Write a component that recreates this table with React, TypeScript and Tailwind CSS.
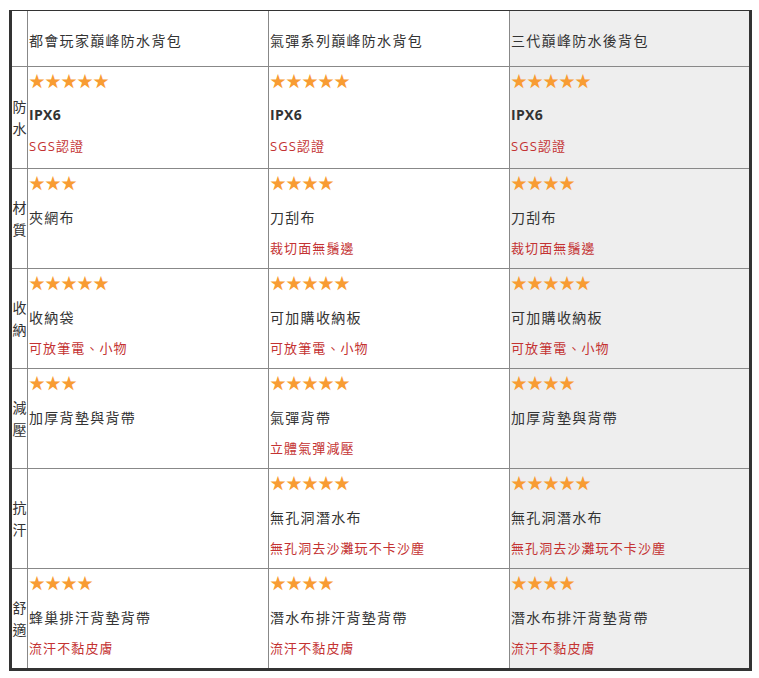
import React from "react";

type Cell = { stars: number; main: string; sub: string; bold?: boolean } | null;

const headers = ["都會玩家巔峰防水背包", "氣彈系列巔峰防水背包", "三代巔峰防水後背包"];

const rows: { label: string; cells: Cell[] }[] = [
  {
    label: "防水",
    cells: [
      { stars: 5, main: "IPX6", sub: "SGS認證", bold: true },
      { stars: 5, main: "IPX6", sub: "SGS認證", bold: true },
      { stars: 5, main: "IPX6", sub: "SGS認證", bold: true },
    ],
  },
  {
    label: "材質",
    cells: [
      { stars: 3, main: "夾網布", sub: "" },
      { stars: 4, main: "刀刮布", sub: "裁切面無鬚邊" },
      { stars: 4, main: "刀刮布", sub: "裁切面無鬚邊" },
    ],
  },
  {
    label: "收納",
    cells: [
      { stars: 5, main: "收納袋", sub: "可放筆電、小物" },
      { stars: 5, main: "可加購收納板", sub: "可放筆電、小物" },
      { stars: 5, main: "可加購收納板", sub: "可放筆電、小物" },
    ],
  },
  {
    label: "減壓",
    cells: [
      { stars: 3, main: "加厚背墊與背帶", sub: "" },
      { stars: 5, main: "氣彈背帶", sub: "立體氣彈減壓" },
      { stars: 4, main: "加厚背墊與背帶", sub: "" },
    ],
  },
  {
    label: "抗汗",
    cells: [
      null,
      { stars: 5, main: "無孔洞潛水布", sub: "無孔洞去沙灘玩不卡沙塵" },
      { stars: 5, main: "無孔洞潛水布", sub: "無孔洞去沙灘玩不卡沙塵" },
    ],
  },
  {
    label: "舒適",
    cells: [
      { stars: 4, main: "蜂巢排汗背墊背帶", sub: "流汗不黏皮膚" },
      { stars: 4, main: "潛水布排汗背墊背帶", sub: "流汗不黏皮膚" },
      { stars: 4, main: "潛水布排汗背墊背帶", sub: "流汗不黏皮膚" },
    ],
  },
];

const font = { fontFamily: '"Open Sans", "Noto Sans CJK TC", sans-serif' };

function DataCell({ cell, gray }: { cell: Cell; gray: boolean }) {
  return (
    <div className={`${gray ? "bg-[#eeeeee]" : "bg-white"} pl-px pt-[3px] flex flex-col`}>
      {cell && (
        <>
          <div className="h-[20px] leading-[20px] text-[16px] text-[#f89c33]" style={{ fontFamily: '"Noto Sans CJK TC", sans-serif' }}>
            {"★".repeat(cell.stars)}
          </div>
          <div
            className={`mt-[16px] h-[20px] leading-[20px] text-[14px] text-[#333] ${cell.bold ? "font-bold tracking-[0.3px] -translate-y-px" : "tracking-[1.3px]"}`}
          >
            {cell.main}
          </div>
          {cell.sub && (
            <div className="mt-[10px] h-[20px] leading-[20px] text-[13px] tracking-[1.1px] text-[#c43232]">{cell.sub}</div>
          )}
        </>
      )}
    </div>
  );
}

export default function App() {
  return (
    <div className="bg-white w-[759px] h-[678px] pt-[10px] pl-[9px]" style={font}>
      <div className="w-[743px] border-[#333] border-t border-x-[3px] border-b-[3px] bg-[#888] grid grid-cols-[15px_240px_240px_239px] grid-rows-[55px_101px_99px_99px_99px_99px_99px] gap-px">
        <div className="bg-white" />
        {headers.map((h, i) => (
          <div
            key={h}
            className={`${i === 2 ? "bg-[#eeeeee]" : "bg-white"} flex items-center pl-px pt-[4px] text-[14px] tracking-[1.3px] text-[#333]`}
          >
            {h}
          </div>
        ))}
        {rows.map((r) => (
          <React.Fragment key={r.label}>
            <div className="bg-white flex flex-col items-center justify-center text-[14px] leading-[22px] text-[#333]">
              {r.label.split("").map((c) => (
                <span key={c}>{c}</span>
              ))}
            </div>
            {r.cells.map((c, i) => (
              <DataCell key={i} cell={c} gray={i === 2} />
            ))}
          </React.Fragment>
        ))}
      </div>
    </div>
  );
}
